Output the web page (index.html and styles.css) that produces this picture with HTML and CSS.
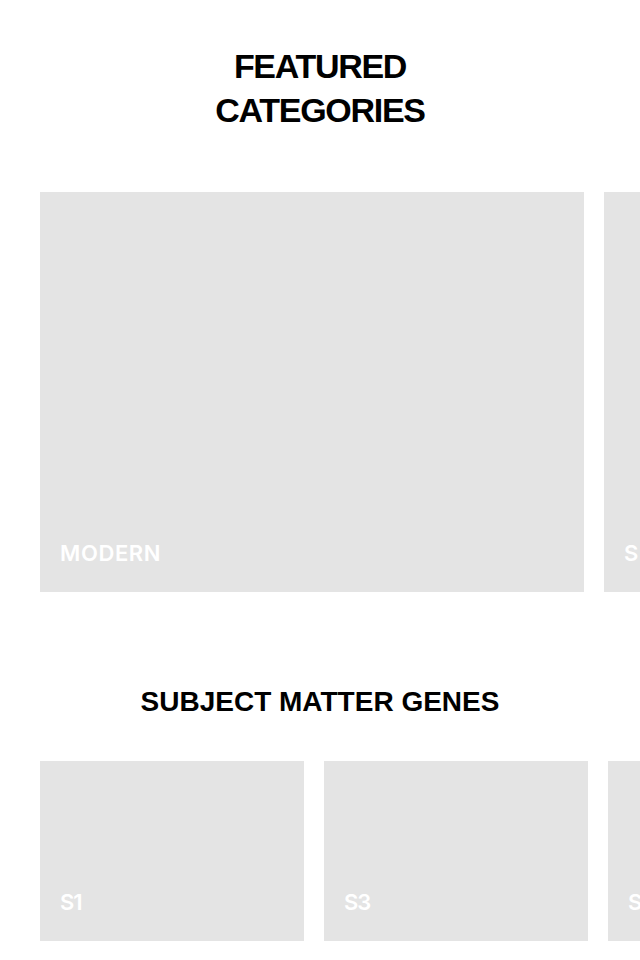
FILE: index.html
```html
<!DOCTYPE html>
<html lang="en">
<head>
<meta charset="utf-8">
<title>Categories</title>
<link rel="stylesheet" href="styles.css">
</head>
<body>
<section class="section featured">
  <h2 class="heading heading-lg">FEATURED<br>CATEGORIES</h2>
  <div class="rail">
    <a class="card card-lg"><span class="label">MODERN</span></a>
    <a class="card card-lg"><span class="label">SURREALISM</span></a>
  </div>
</section>
<section class="section genes">
  <h2 class="heading heading-md">SUBJECT MATTER GENES</h2>
  <div class="rail">
    <a class="card card-sm"><span class="label label-sm">S1</span></a>
    <a class="card card-sm"><span class="label label-sm">S3</span></a>
    <a class="card card-sm"><span class="label label-sm">S5</span></a>
  </div>
</section>
</body>
</html>
```
FILE: styles.css
```css
html, body {
  margin: 0;
  padding: 0;
  background: #fff;
  overflow: hidden;
}
body {
  width: 640px;
  font-family: "Liberation Sans", Arial, sans-serif;
}
.section {
  display: flex;
  flex-direction: column;
}
.featured {
  padding-top: 44px;
}
.genes {
  padding-top: 94px;
}
.heading {
  margin: 0;
  text-align: center;
  font-weight: 700;
  color: #000;
}
.heading-lg {
  font-size: 34px;
  line-height: 44px;
  letter-spacing: -1.3px;
}
.heading-md {
  font-size: 28px;
  line-height: 32px;
  letter-spacing: 0;
}
.rail {
  display: flex;
  gap: 20px;
  padding-left: 40px;
  overflow: hidden;
}
.featured .rail {
  margin-top: 60px;
}
.genes .rail {
  margin-top: 43px;
}
.card {
  flex: none;
  display: flex;
  align-items: flex-end;
  background: #e4e4e4;
  box-sizing: border-box;
}
.card-lg {
  width: 544px;
  height: 400px;
  padding: 0 20px 25px;
}
.card-sm {
  width: 264px;
  height: 180px;
  padding: 0 20px 25px;
}
.label {
  color: #fff;
  font-family: Inter, "Liberation Sans", sans-serif;
  font-size: 22px;
  line-height: 28px;
  font-weight: 600;
  letter-spacing: 0.6px;
  white-space: nowrap;
}
.label-sm {
  letter-spacing: -1px;
}
```
